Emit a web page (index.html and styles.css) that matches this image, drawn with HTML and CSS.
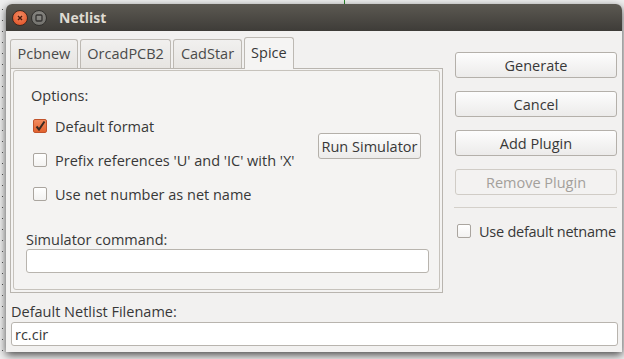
FILE: index.html
```html
<!DOCTYPE html>
<html lang="en">
<head>
    <meta charset="UTF-8">
    <title>Netlist</title>
    <link rel="stylesheet" href="styles.css">
</head>
<body>
    <div class="window">
        <div class="titlebar">
            <span class="wbtn close">
                <svg width="14" height="14" viewBox="0 0 14 14"><path d="M5 5 L9 9 M9 5 L5 9" stroke="#4a1a0c" stroke-width="1.4"/></svg>
            </span>
            <span class="wbtn min">
                <svg width="14" height="14" viewBox="0 0 14 14"><rect x="4" y="4" width="6" height="6" rx="1" fill="none" stroke="#333230" stroke-width="1.3"/></svg>
            </span>
            <span class="title">Netlist</span>
        </div>

        <div class="content">
            <div class="main">
                <div class="notebook">
                    <div class="tabs">
                        <div class="tab">Pcbnew</div>
                        <div class="tab">OrcadPCB2</div>
                        <div class="tab">CadStar</div>
                        <div class="tab active">Spice</div>
                    </div>
                    <div class="page">
                        <div class="box">
                            <div class="options">
                                <div class="label">Options:</div>
                                <div class="opt-row">
                                    <div class="checks">
                                        <label class="check"><span class="cb checked"><svg width="12" height="12" viewBox="0 0 12 12"><path d="M2.5 6.5 L5 9.5 L10.5 1.5" fill="none" stroke="#3a2a22" stroke-width="2"/></svg></span>Default format</label>
                                        <label class="check"><span class="cb"></span>Prefix references 'U' and 'IC' with 'X'</label>
                                        <label class="check"><span class="cb"></span>Use net number as net name</label>
                                    </div>
                                    <button class="btn run">Run Simulator</button>
                                </div>
                            </div>
                            <div class="label sim-label">Simulator command:</div>
                            <input class="field" type="text" value="">
                        </div>
                    </div>
                </div>

                <div class="side">
                    <button class="btn">Generate</button>
                    <button class="btn">Cancel</button>
                    <button class="btn">Add Plugin</button>
                    <button class="btn" disabled>Remove Plugin</button>
                    <div class="sep"></div>
                    <label class="check side-check"><span class="cb"></span>Use default netname</label>
                </div>
            </div>

            <div class="filename">
                <div class="label">Default Netlist Filename:</div>
                <input class="field" type="text" value="rc.cir">
            </div>
        </div>
    </div>
</body>
</html>
```

FILE: styles.css
```css
* {
    margin: 0;
    padding: 0;
    box-sizing: border-box;
}

body {
    height: 359px;
    overflow: hidden;
    padding: 4px 0 0 6px;
    font-family: "Open Sans", "Noto Sans", sans-serif;
    font-size: 14.5px;
    color: #383838;
    background:
        linear-gradient(#2e8b2e, #2e8b2e) 344px 0 / 1px 4px no-repeat,
        radial-gradient(circle, #555 0.6px, transparent 0.8px) 0 4px / 5px 11px repeat-y,
        #efefef;
}

.window {
    width: 616px;
    height: 348px;
    background: #f2f1f0;
    border-radius: 6px 6px 0 0;
    box-shadow: 0 3px 9px rgba(0, 0, 0, 0.7);
    overflow: hidden;
    display: flex;
    flex-direction: column;
}

/* title bar */
.titlebar {
    height: 27px;
    flex-shrink: 0;
    display: flex;
    align-items: center;
    gap: 3px;
    padding-left: 6px;
    background: linear-gradient(#5c5952, #3e3c38);
}

.wbtn {
    width: 16px;
    height: 16px;
    border-radius: 50%;
    display: flex;
    align-items: center;
    justify-content: center;
}

.wbtn.close {
    background: radial-gradient(circle at 50% 35%, #f58c64, #dd4a1e);
    border: 1px solid #3c2a22;
}

.wbtn.min {
    background: radial-gradient(circle at 50% 35%, #8c8b86, #6d6c68);
    border: 1px solid #32312e;
}

.title {
    margin-left: 9px;
    font-weight: bold;
    font-size: 14px;
    color: #dfdbd2;
}

/* body */
.content {
    flex: 1;
    padding: 6px 5px 0 4px;
    display: flex;
    flex-direction: column;
}

.main {
    display: flex;
    align-items: flex-start;
    gap: 12px;
}

.notebook {
    width: 433px;
}

.tabs {
    height: 31px;
    display: flex;
    align-items: flex-end;
    gap: 2px;
}

.tab {
    height: 29px;
    padding: 0 6.5px;
    line-height: 28px;
    border: 1px solid #bdb9b3;
    border-bottom: none;
    border-radius: 3px 3px 0 0;
    background: linear-gradient(#f1f0ef, #e7e5e2);
    color: #4a4a4a;
}

.tab.active {
    height: 32px;
    margin-bottom: -1px;
    line-height: 30px;
    position: relative;
    z-index: 1;
    background: #f5f4f3;
    color: #383838;
}

.page {
    height: 225px;
    border: 1px solid #b9b5af;
    padding: 1px 2px 2px 2px;
    background: #f4f3f2;
}

.box {
    height: 100%;
    border: 1px solid #c6c2bc;
    border-radius: 3px;
    padding: 16px 10px 0 12px;
}

.label {
    line-height: 18px;
}

.options {
    padding-left: 5px;
}

.opt-row {
    display: flex;
    justify-content: space-between;
    margin-top: 12px;
}

.checks {
    display: flex;
    flex-direction: column;
    gap: 16px;
}

.check {
    height: 18px;
    display: flex;
    align-items: center;
    gap: 8px;
    white-space: nowrap;
}

.cb {
    flex-shrink: 0;
    width: 14px;
    height: 14px;
    margin-left: 2px;
    border: 1px solid #aaa59f;
    border-radius: 2px;
    background: linear-gradient(#fff, #f3f2f1);
    display: flex;
    align-items: center;
    justify-content: center;
}

.cb.checked {
    border-color: #c1532b;
    background: linear-gradient(#f28b5e, #e2622f);
}

.btn {
    height: 26px;
    border: 1px solid #b4b0aa;
    border-radius: 3px;
    background: linear-gradient(#fdfdfd, #ecebea);
    font: inherit;
    color: #383838;
}

.btn:disabled {
    border-color: #d0ccc6;
    background: #f3f2f1;
    color: #a3a09b;
}

.run {
    width: 103px;
    margin: 16px 8px 0 0;
}

.sim-label {
    margin-top: 28px;
}

.field {
    display: block;
    width: 100%;
    height: 24px;
    border: 1px solid #b8b4ae;
    border-radius: 3px;
    background: #fff;
    padding: 0 3px;
    font: inherit;
    color: #383838;
    outline: none;
}

/* right column */
.side {
    width: 162px;
    margin-top: 15px;
    display: flex;
    flex-direction: column;
    gap: 13px;
}

.sep {
    height: 1px;
    margin: -1px 0 0 -1px;
    background: #d4d0ca;
}

.side-check {
    margin-top: 1px;
    letter-spacing: -0.25px;
}

.filename {
    margin-top: 10px;
    padding-left: 1px;
}

.filename .field {
    margin-top: 1px;
    width: 607px;
}
```
